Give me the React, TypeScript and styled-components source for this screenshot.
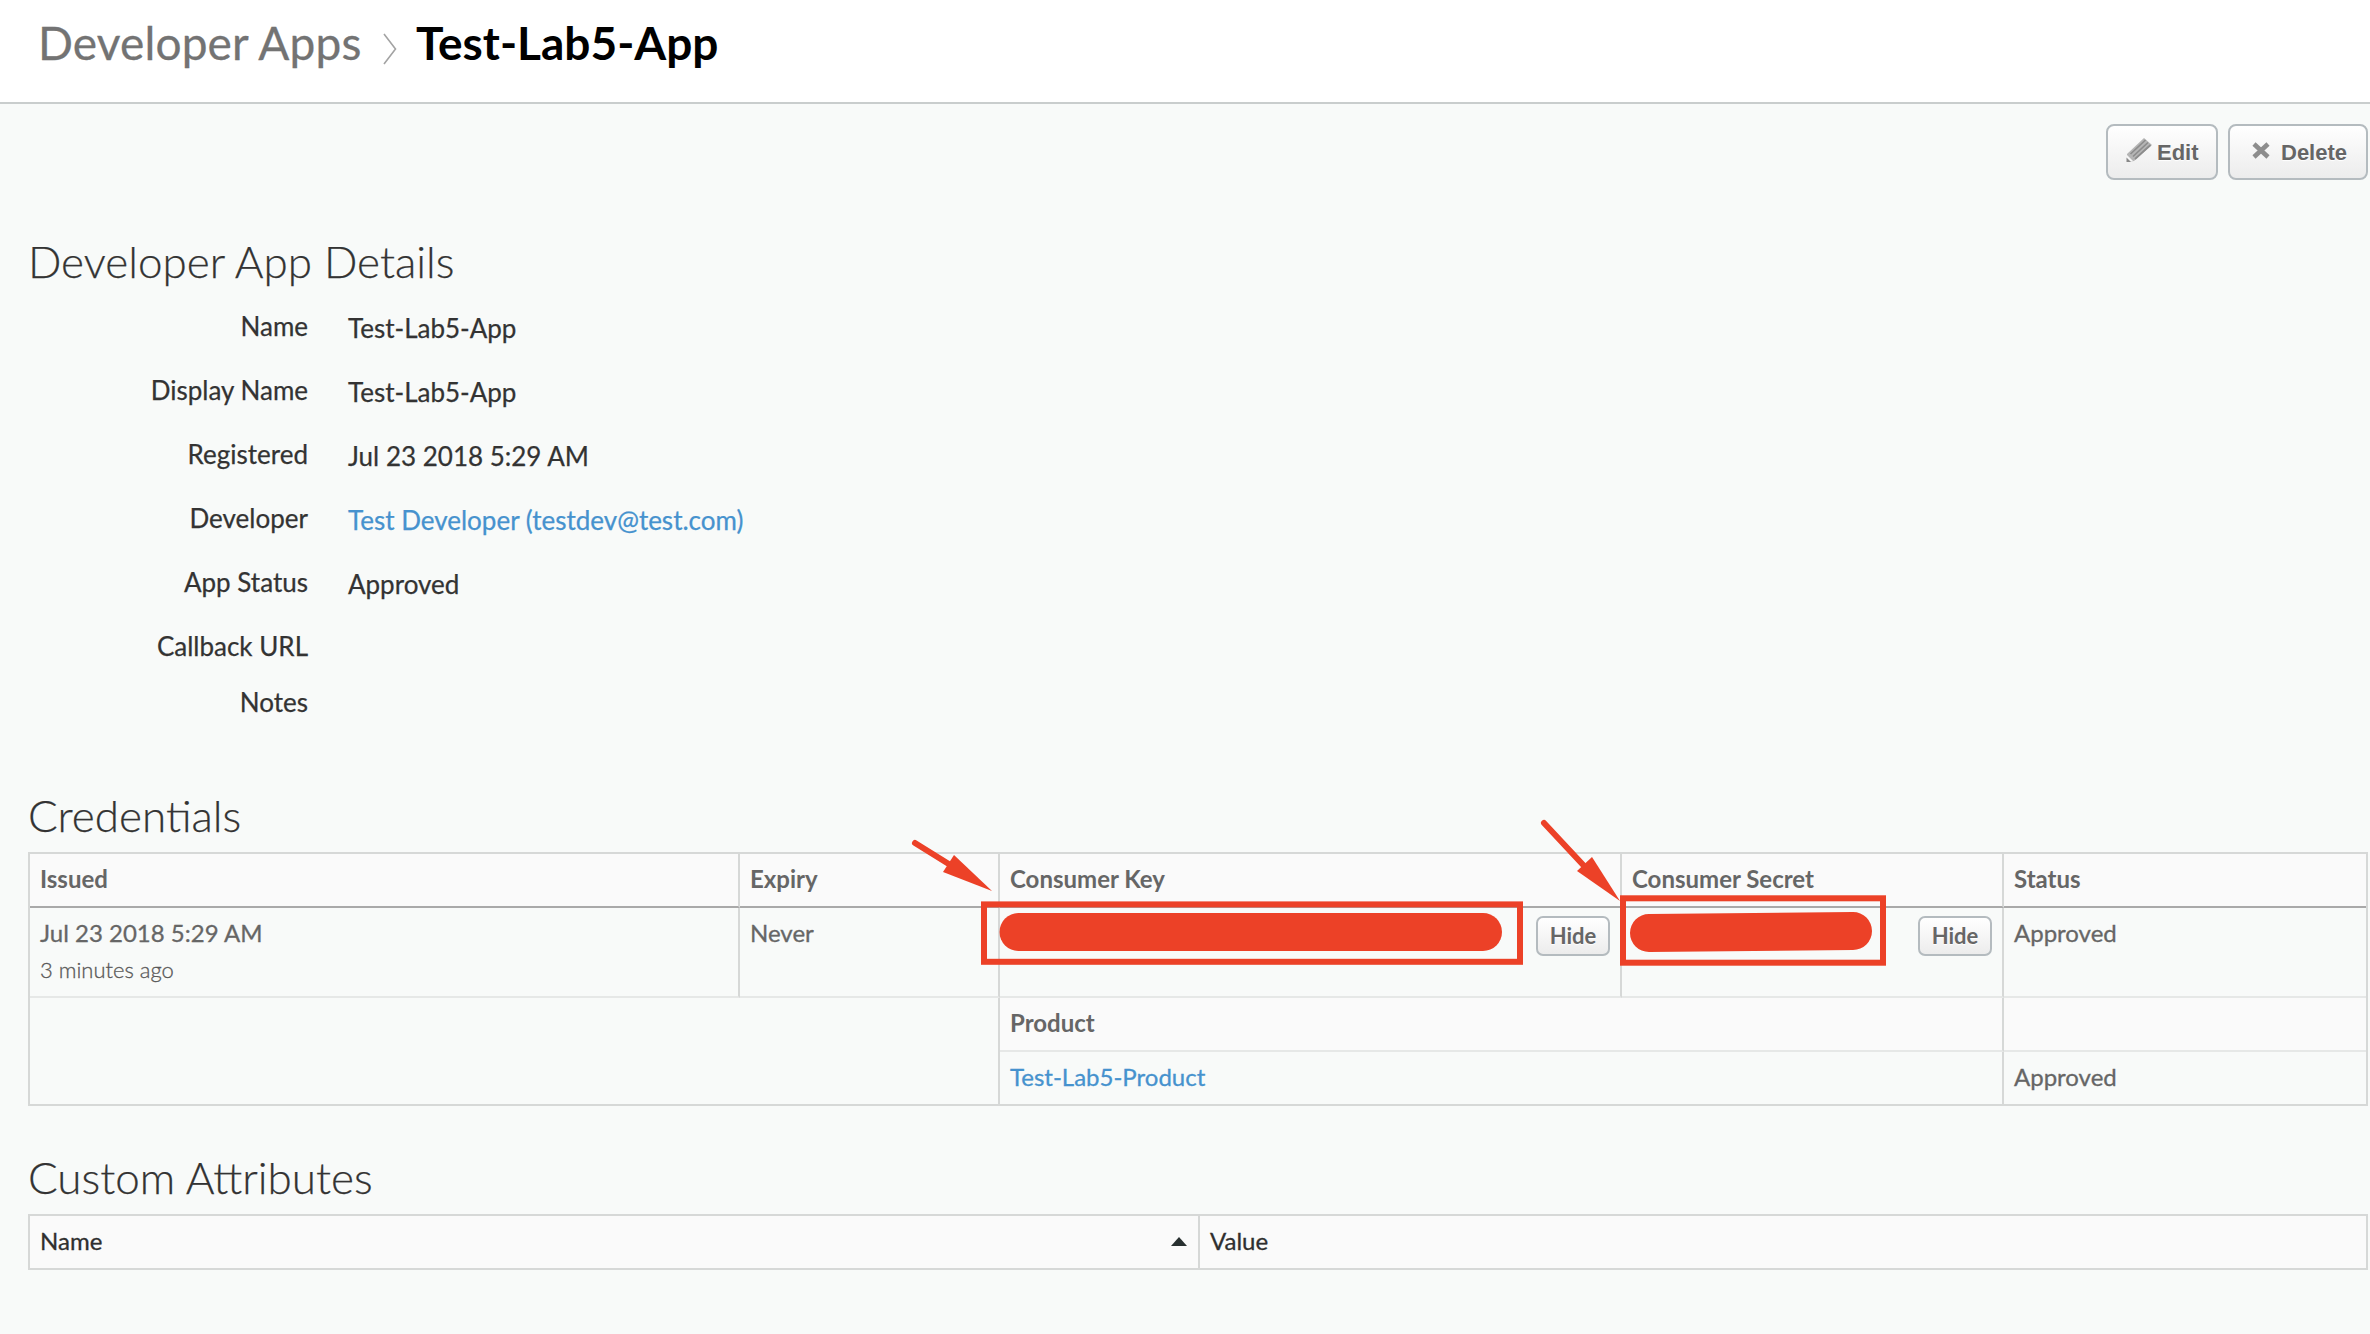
import React from "react";
import styled, { createGlobalStyle, css } from "styled-components";

const RED = "#ec4127";

const Global = createGlobalStyle`
  * { box-sizing: border-box; }
  body { margin: 0; background: #f8faf9; font-family: Lato, "Open Sans", sans-serif; }
`;

const Page = styled.div`
  position: relative;
  width: 2370px;
  height: 1334px;
  overflow: hidden;
  background: #f8faf9;
`;

const Header = styled.header`
  display: flex;
  align-items: flex-start;
  height: 104px;
  padding: 15px 0 0 38px;
  background: #fff;
  border-bottom: 2px solid #c9cdcd;
  font-size: 46px;
  line-height: 56px;
`;

const Parent = styled.a`
  width: 324px;
  color: #737373;
  letter-spacing: 0.15px;
  white-space: nowrap;
  -webkit-text-stroke: 0.3px currentColor;
`;

const Chevron = styled.svg`
  width: 14px;
  height: 32px;
  margin: 18px 19px 0 21px;
`;

const Current = styled.h1`
  margin: 0;
  font-size: 46px;
  font-weight: 700;
  line-height: 56px;
  color: #000;
`;

const Toolbar = styled.div`
  display: flex;
  justify-content: flex-end;
  gap: 10px;
  height: 76px;
  padding: 20px 2px 0 0;
`;

const face = css`
  display: flex;
  align-items: center;
  border: 2px solid #b4bbbf;
  background: linear-gradient(#ffffff, #ececec);
  color: #666;
  font-weight: 700;
  text-shadow: 0 1px 1px #fff;
`;

const ToolButton = styled.button<{ $width: number; $indent: number; $gap: number }>`
  ${face}
  width: ${(p) => p.$width}px;
  height: 56px;
  padding: 2px 0 0 ${(p) => p.$indent}px;
  gap: ${(p) => p.$gap}px;
  border-radius: 8px;
  font-family: "Liberation Sans", Arial, sans-serif;
  font-size: 22px;
  line-height: 28px;
`;

const ToolIcon = styled.svg`
  flex: none;
  margin-bottom: 6px;
`;

const HideButton = styled.button`
  ${face}
  justify-content: center;
  width: 74px;
  height: 40px;
  margin-top: 8px;
  padding: 0 0 2px;
  border-radius: 7px;
  font-family: Lato, sans-serif;
  font-size: 22px;
`;

const Content = styled.main`
  padding: 0 2px 0 28px;
`;

const SectionTitle = styled.h2<{ $top: number }>`
  margin: ${(p) => p.$top}px 0 0;
  height: 65px;
  font-size: 44px;
  font-weight: 300;
  line-height: 56px;
  color: #333;
  -webkit-text-stroke: 0.25px currentColor;
`;

const Details = styled.dl`
  display: flex;
  flex-direction: column;
  margin: 0;
  padding-top: 10px;
`;

const Detail = styled.div<{ $short?: boolean }>`
  display: grid;
  grid-template-columns: 280px 1fr;
  column-gap: 40px;
  height: ${(p) => (p.$short ? 56 : 64)}px;
  font-size: 26px;
  line-height: 36px;
  color: #333;
  -webkit-text-stroke: 0.25px currentColor;
`;

const Label = styled.dt`
  text-align: right;
`;

const Value = styled.dd`
  margin: 0;
  padding-top: 2px;
`;

const Link = styled.a`
  color: #4692ce;
`;

const Grid = styled.section<{ $columns: string }>`
  display: grid;
  grid-template-columns: ${(p) => p.$columns};
  border: 2px solid #d6d8d7;
  font-size: 24px;
  line-height: 32px;
  color: #666;
`;

const Cell = styled.div<{
  $height: number;
  $head?: boolean;
  $span?: number;
  $rows?: number;
  $line?: string;
  $last?: boolean;
}>`
  display: flex;
  justify-content: space-between;
  align-items: flex-start;
  height: ${(p) => p.$height}px;
  padding: 9px 11px 0 10px;
  background: ${(p) => (p.$head ? "#fafafa" : "transparent")};
  grid-column: span ${(p) => p.$span ?? 1};
  grid-row: span ${(p) => p.$rows ?? 1};
  border-right: ${(p) => (p.$last ? "none" : "2px solid #d6d8d7")};
  border-bottom: ${(p) => (p.$line ? `2px solid ${p.$line}` : "none")};
  -webkit-text-stroke: 0.3px currentColor;
`;

const SecretCell = styled(Cell)`
  justify-content: flex-end;
  padding-top: 0;
  padding-right: 10px;
  -webkit-text-stroke: 0;
`;

const Strong = styled.strong`
  font-weight: 700;
  -webkit-text-stroke: 0;
`;

const Heading = styled.span`
  color: #2f2f2f;
`;

const Stack = styled.div`
  display: flex;
  flex-direction: column;
`;

const Ago = styled.small`
  margin-top: 6px;
  font-size: 22px;
  font-weight: 300;
  line-height: 30px;
  color: #585858;
`;

const SortMark = styled.svg`
  margin-top: 12px;
`;

const Annotations = styled.svg`
  position: absolute;
  left: 0;
  top: 0;
  pointer-events: none;
`;

const DARK = "#a9a9a9";
const SOFT = "#e6e8e7";

const details: { label: string; value?: React.ReactNode; short?: boolean }[] = [
  { label: "Name", value: "Test-Lab5-App" },
  { label: "Display Name", value: "Test-Lab5-App" },
  { label: "Registered", value: "Jul 23 2018 5:29 AM" },
  { label: "Developer", value: <Link>Test Developer (testdev@test.com)</Link> },
  { label: "App Status", value: "Approved" },
  { label: "Callback URL", short: true },
  { label: "Notes", short: true },
];

const heads = ["Issued", "Expiry", "Consumer Key", "Consumer Secret", "Status"];

export default function App() {
  return (
    <Page>
      <Global />
      <Header>
        <Parent>Developer Apps</Parent>
        <Chevron viewBox="0 0 14 32" fill="none" stroke="#a3a3a3" strokeWidth="1.6">
          <path d="M1 1L12.5 16L1 31" />
        </Chevron>
        <Current>Test-Lab5-App</Current>
      </Header>
      <Toolbar>
        <ToolButton $width={112} $indent={18} $gap={4}>
          <ToolIcon width="27" height="26" viewBox="0 0 27 26">
            <path d="M1 17L18 1L26 8L8 24L1 25Z" fill="#b5b5b5" />
            <path d="M4.5 17L19.5 3M7 19.5L22 5.5M9 22L24.5 8" stroke="#8c8c8c" strokeWidth="1.7" />
            <path d="M1 18L7 24L1 25Z" fill="#f5f5f5" />
            <path d="M0.5 20.5L5 25H0.5Z" fill="#888" />
          </ToolIcon>
          Edit
        </ToolButton>
        <ToolButton $width={140} $indent={22} $gap={11}>
          <ToolIcon width="18" height="17" viewBox="0 0 18 17">
            <path d="M2 2L16 15M16 2L2 15" stroke="#8d8d8d" strokeWidth="4.6" />
          </ToolIcon>
          Delete
        </ToolButton>
      </Toolbar>
      <Content>
        <SectionTitle $top={53}>Developer App Details</SectionTitle>
        <Details>
          {details.map((d) => (
            <Detail key={d.label} $short={d.short}>
              <Label>{d.label}</Label>
              <Value>{d.value}</Value>
            </Detail>
          ))}
        </Details>

        <SectionTitle $top={47}>Credentials</SectionTitle>
        <Grid $columns="710px 260px 622px 382px 362px">
          {heads.map((h, i) => (
            <Cell key={h} $height={54} $head $line={DARK} $last={i === 4}>
              <Strong>{h}</Strong>
            </Cell>
          ))}
          <Cell $height={90} $line={SOFT}>
            <Stack>
              <span>Jul 23 2018 5:29 AM</span>
              <Ago>3 minutes ago</Ago>
            </Stack>
          </Cell>
          <Cell $height={90} $line={SOFT}>Never</Cell>
          <SecretCell $height={90} $line={SOFT}>
            <HideButton>Hide</HideButton>
          </SecretCell>
          <SecretCell $height={90} $line={SOFT}>
            <HideButton>Hide</HideButton>
          </SecretCell>
          <Cell $height={90} $line={SOFT} $last>Approved</Cell>

          <Cell $height={106} $span={2} $rows={2} />
          <Cell $height={54} $span={2} $head $line={SOFT}>
            <Strong>Product</Strong>
          </Cell>
          <Cell $height={54} $head $line={SOFT} $last />
          <Cell $height={52} $span={2}>
            <Link>Test-Lab5-Product</Link>
          </Cell>
          <Cell $height={52} $last>Approved</Cell>
        </Grid>

        <SectionTitle $top={43}>Custom Attributes</SectionTitle>
        <Grid $columns="1170px 1166px">
          <Cell $height={52} $head>
            <Heading>Name</Heading>
            <SortMark width="16" height="9" viewBox="0 0 16 9">
              <path d="M8 0L16 9H0Z" fill="#283030" />
            </SortMark>
          </Cell>
          <Cell $height={52} $head $last>
            <Heading>Value</Heading>
          </Cell>
        </Grid>
      </Content>

      <Annotations width="2370" height="1334" viewBox="0 0 2370 1334">
        <g fill="none" stroke={RED} strokeWidth="6">
          <rect x="984" y="904.4" width="536" height="57.4" />
          <rect x="1623" y="898.3" width="260" height="64.4" />
          <path d="M915 843L952 866" strokeLinecap="round" />
          <path d="M1544 823L1586 868" strokeLinecap="round" />
        </g>
        <g fill={RED}>
          <path d="M954 855L992 891L943 872Z" />
          <path d="M1592 857L1620 901L1577 871Z" />
          <rect x="999.5" y="913" width="502.5" height="38" rx="19" />
          <path d="M1649 914L1853 912A19 19 0 0 1 1853 950L1649 952A19 19 0 0 1 1649 914Z" />
        </g>
      </Annotations>
    </Page>
  );
}
